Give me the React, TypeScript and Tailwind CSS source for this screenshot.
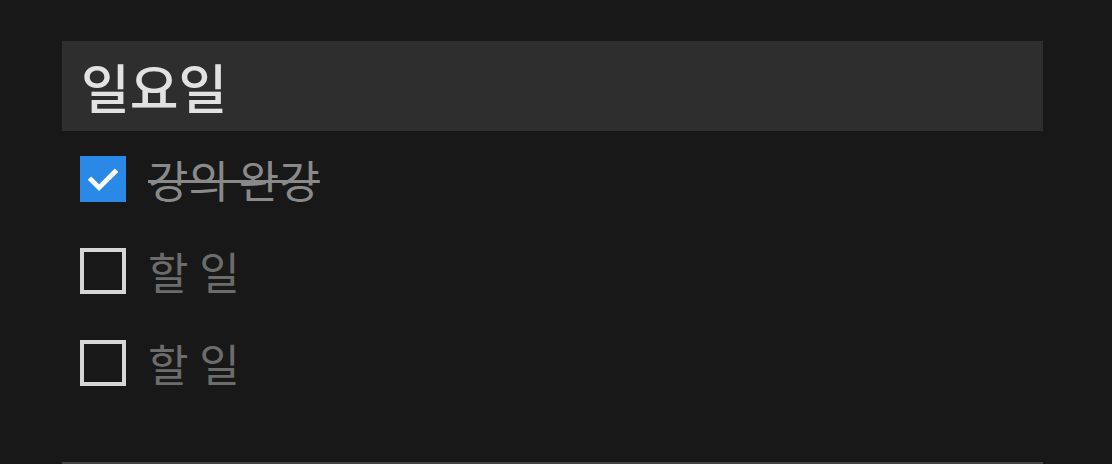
import { useState } from "react";

type Todo = { id: number; text: string; done: boolean };

function CheckBox({ checked, onClick }: { checked: boolean; onClick: () => void }) {
    return (
        <button
            onClick={onClick}
            className={
                checked
                    ? "w-[46px] h-[46px] shrink-0 bg-[#2a88e6] flex items-center justify-center"
                    : "w-[46px] h-[46px] shrink-0 border-[4px] border-[#d6d6d6] bg-transparent"
            }
        >
            {checked && (
                <svg width="38" height="38" viewBox="0 0 24 24" fill="none">
                    <path d="M4.5 12.5l5 5 10-10" stroke="#fff" strokeWidth="3" strokeLinecap="square" />
                </svg>
            )}
        </button>
    );
}

function App() {
    const [todos, setTodos] = useState<Todo[]>([
        { id: 1, text: "강의 완강", done: true },
        { id: 2, text: "할 일", done: false },
        { id: 3, text: "할 일", done: false },
    ]);

    const toggle = (id: number) =>
        setTodos(todos.map((t) => (t.id === id ? { ...t, done: !t.done } : t)));

    return (
        <div className="h-[464px] overflow-hidden bg-[#181818] pt-[41px] px-[62px] w-[1112px] font-['Noto_Sans_CJK_KR','Noto_Sans',sans-serif]">
            <div className="w-[981px]">
                <div className="h-[90px] bg-[#2e2e2e] flex items-center pl-[19px]">
                    <h1 className="text-[53px] font-medium text-[#e2e2e2] leading-none">일요일</h1>
                </div>
                <ul className="pt-[25px]">
                    {todos.map((t) => (
                        <li key={t.id} className="h-[92px] flex items-start pl-[18px] gap-[22px]">
                            <CheckBox checked={t.done} onClick={() => toggle(t.id)} />
                            <span
                                className={
                                    t.done
                                        ? "text-[44px] leading-[46px] text-[#8a8a8a] line-through decoration-[3px]"
                                        : "text-[44px] leading-[46px] tracking-[0.5px] text-[#6c6c6c]"
                                }
                            >
                                {t.text}
                            </span>
                        </li>
                    ))}
                </ul>
                <div className="mt-[30px] border-t-[2px] border-[#444]" />
            </div>
        </div>
    );
}

export default App;
